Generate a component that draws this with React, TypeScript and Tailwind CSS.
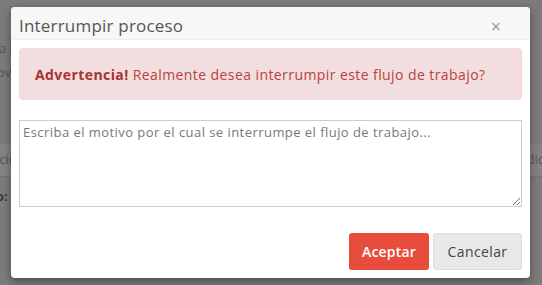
import React from "react";

const font = { fontFamily: '"Open Sans", "DejaVu Sans", sans-serif' };

function BackgroundPage() {
  // Página de fondo, atenuada por el overlay del modal.
  return (
    <div className="flex h-full w-full flex-col text-[13px] text-[#555]">
      <div className="h-[40px]" />
      <div className="flex h-[18px] items-center">
        <span className="-ml-[1px]">a n</span>
      </div>
      <div className="flex h-[30px] items-center">
        <span className="-ml-[3px]">ov</span>
      </div>
      <div className="h-[56px]" />
      <div className="flex h-[32px] items-center justify-between bg-[#838383]">
        <span className="-ml-[4px]">icio</span>
        <span className="-mr-[2px]">dic</span>
      </div>
      <div className="flex h-[40px] items-center border-t border-[#727272]">
        <span className="-ml-[4px] font-bold text-[#3a3a3a]">o:</span>
      </div>
    </div>
  );
}

export default function App() {
  return (
    <div
      className="relative h-[285px] w-[542px] overflow-hidden bg-[#7b7b7b]"
      style={font}
    >
      <BackgroundPage />

      <div className="absolute left-[11px] top-[7px] flex h-[271px] w-[519px] flex-col rounded-[4px] bg-white shadow-[0_3px_9px_rgba(0,0,0,0.4)]">
        <div className="flex h-[33px] items-center justify-between rounded-t-[4px] border-b border-[#eee] bg-[#f7f7f7] pl-[8px] pr-[29px] pt-[6px]">
          <span className="text-[17px] tracking-[0.2px] text-[#555]">Interrumpir proceso</span>
          <span className="text-[18px] leading-none text-[#999]">×</span>
        </div>

        <div className="flex flex-col px-[8px]">
          <div className="mt-[8px] flex h-[52px] items-center rounded-[4px] border border-[#f0d8da] bg-[#f2dede] pl-[15px] text-[14px] tracking-[0.42px] text-[#b8433f]">
            <span className="font-bold text-[#a8322f]">Advertencia!</span>
            <span className="ml-[4px]">Realmente desea interrumpir este flujo de trabajo?</span>
          </div>

          <textarea
            className="mt-[20px] h-[87px] w-full resize-y border border-[#ccc] px-[3px] py-[2px] text-[13px] tracking-[0.45px] text-[#555] placeholder:text-[#777] outline-none"
            style={font}
            placeholder="Escriba el motivo por el cual se interrumpe el flujo de trabajo..."
          />

          <div className="mt-[26px] flex justify-end gap-[4px]">
            <button className="h-[37px] w-[80px] rounded-[3px] bg-[#e74c3c] text-[14px] font-semibold tracking-[0.2px] text-white">
              Aceptar
            </button>
            <button className="h-[37px] w-[89px] rounded-[3px] border border-[#ddd] bg-[#e8e8e8] text-[14px] tracking-[0.4px] text-[#444]">
              Cancelar
            </button>
          </div>
        </div>
      </div>
    </div>
  );
}
